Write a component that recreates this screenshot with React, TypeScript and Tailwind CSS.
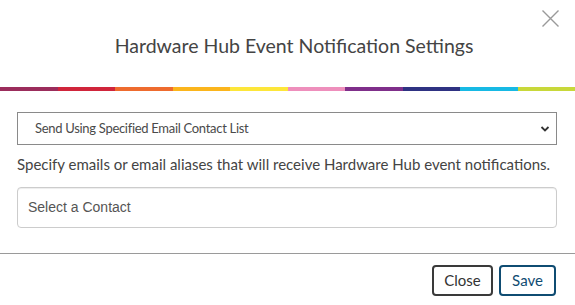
import React from "react";

const stripe = [
  "bg-[#9b2d5c]",
  "bg-[#d0253b]",
  "bg-[#ee6b2e]",
  "bg-[#fbb51c]",
  "bg-[#fde63a]",
  "bg-[#ee8fbc]",
  "bg-[#7f2f8a]",
  "bg-[#2e3282]",
  "bg-[#17b9e4]",
  "bg-[#c8d83a]",
];

export default function App() {
  return (
    <div
      className="relative w-[575px] h-[305px] bg-white flex flex-col overflow-hidden"
      style={{ fontFamily: "Lato, 'Open Sans', sans-serif" }}
    >
      <button className="absolute left-[541px] top-[9px] w-[19px] h-[19px]" aria-label="Close">
        <svg width="19" height="19" viewBox="0 0 19 19">
          <path d="M1.5 1.5 L17.5 17.5 M17.5 1.5 L1.5 17.5" stroke="#9a9a9a" strokeWidth="1.4" fill="none" />
        </svg>
      </button>

      <div className="h-[87px] pt-[32px] pl-[13px] flex justify-center">
        <h1 className="text-[19.5px] leading-[28px] text-[#444] font-normal">
          Hardware Hub Event Notification Settings
        </h1>
      </div>

      <div className="flex h-[4px]">
        {stripe.map((c) => (
          <div key={c} className={`flex-1 ${c}`} />
        ))}
      </div>

      <div className="px-[17px] pt-[21px] pr-[18px]">
        <div className="h-[33px] border border-[#8a8a8a] flex items-center justify-between pl-[17px] pr-[6px]">
          <span className="text-[13px] tracking-[-0.3px] leading-[31px] text-[#4a4a4a]">Send Using Specified Email Contact List</span>
          <svg width="10" height="8" viewBox="0 0 10 8">
            <path d="M1.5 2 L5 5.5 L8.5 2" stroke="#333" strokeWidth="1.8" fill="none" />
          </svg>
        </div>

        <p className="mt-[9px] text-[15px] leading-[20px] text-[#444]">
          Specify emails or email aliases that will receive Hardware Hub event notifications.
        </p>

        <div className="mt-[13px] h-[41px] border border-[#cccccc] rounded-[4px] shadow-[inset_0_1px_1px_rgba(0,0,0,0.075)] flex items-center pl-[10px]">
          <span
            className="text-[14px] text-[#555]"
            style={{ fontFamily: "'Liberation Sans', Arial, sans-serif" }}
          >
            Select a Contact
          </span>
        </div>
      </div>

      <div className="mt-[25px] border-t border-[#9a9a9a] flex justify-end gap-[6px] pt-[11px] pr-[19px]">
        <button className="w-[61px] h-[31px] border-2 border-[#3a3a3a] rounded-[4px] text-[15px] text-[#333] flex items-center justify-center">
          Close
        </button>
        <button className="w-[57px] h-[31px] border-2 border-[#0f4c72] rounded-[4px] text-[15px] text-[#0f4c72] flex items-center justify-center">
          Save
        </button>
      </div>
    </div>
  );
}
